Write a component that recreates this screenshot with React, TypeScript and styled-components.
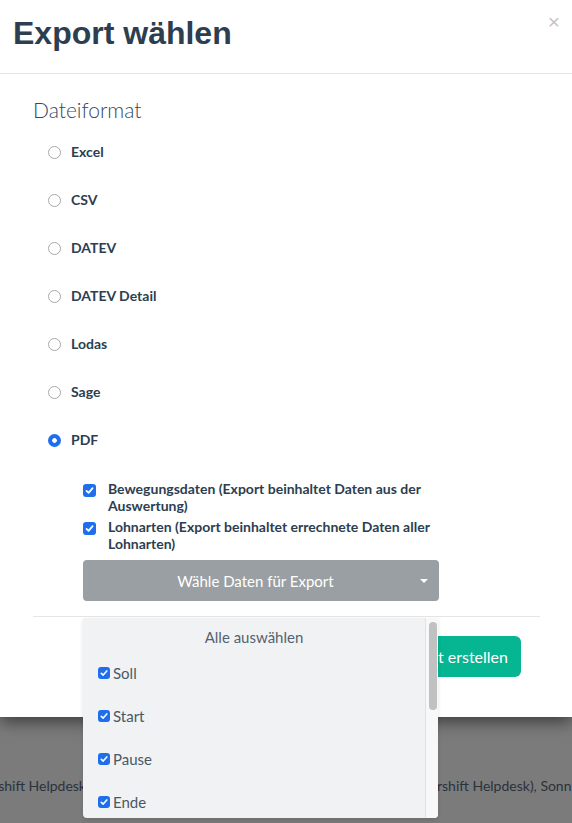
import React, { useState } from 'react'
import styled, { createGlobalStyle } from 'styled-components'

const GlobalStyle = createGlobalStyle`
  html, body {
    margin: 0;
    padding: 0;
  }
  body {
    background: #7b7b7b;
    font-family: Lato, 'Noto Sans', sans-serif;
    overflow: hidden;
  }
`

const blue = '#1f6fed'
const ink = '#2c3e50'

const Page = styled.div`
  width: 572px;
  height: 823px;
  overflow: hidden;
`

const Modal = styled.div`
  position: relative;
  z-index: 1;
  background: #fff;
  box-shadow: 0 5px 15px rgba(0, 0, 0, 0.5);
`

const Header = styled.div`
  box-sizing: border-box;
  height: 74px;
  display: flex;
  justify-content: space-between;
  align-items: flex-start;
  padding: 14px 12px 0 13px;
  border-bottom: 1px solid #e5e5e5;
`

const Title = styled.h2`
  margin: 0;
  font: 700 32px/38px 'Liberation Sans', Arial, sans-serif;
  color: ${ink};
`

const Close = styled.button`
  border: 0;
  background: none;
  padding: 0;
  margin-top: 0;
  font: 400 21px/16px 'Liberation Sans', Arial, sans-serif;
  color: #c4c4c4;
  cursor: pointer;
`

const Body = styled.div`
  padding: 24px 32px 0 33px;
`

const SectionTitle = styled.h3`
  margin: 0 0 20px;
  font: 300 21px/24px Lato, sans-serif;
  color: #34495e;
`

const RadioList = styled.div`
  display: flex;
  flex-direction: column;
  gap: 28px;
  padding-left: 15px;
`

const RadioRow = styled.label`
  display: flex;
  align-items: center;
  gap: 10px;
  font: 700 14px/20px Lato, sans-serif;
  color: ${ink};
  cursor: pointer;
`

const Radio = styled.span<{ $on: boolean }>`
  box-sizing: border-box;
  width: 13px;
  height: 13px;
  border-radius: 50%;
  flex: none;
  border: ${p => (p.$on ? 'none' : '1px solid #a9a9a9')};
  background: ${p =>
    p.$on ? `radial-gradient(circle, #fff 0 2px, ${blue} 2.6px)` : '#fff'};
`

const Sub = styled.div`
  width: 356px;
  margin: 30px 0 0 50px;
`

const CheckList = styled.div`
  display: flex;
  flex-direction: column;
  gap: 4px;
`

const CheckRow = styled.label`
  display: flex;
  align-items: flex-start;
  gap: 12px;
  font: 700 14px/17px Lato, sans-serif;
  color: ${ink};
`

const Box = styled.span<{ $size: number }>`
  flex: none;
  display: inline-flex;
  align-items: center;
  justify-content: center;
  width: ${p => p.$size}px;
  height: ${p => p.$size}px;
  border-radius: 3px;
  background: ${blue};
`

const CheckBoxSlot = styled.span`
  padding-top: 2px;
`

const SelectWrap = styled.div`
  position: relative;
  margin-top: 8px;
`

const SelectButton = styled.button`
  box-sizing: border-box;
  width: 356px;
  height: 41px;
  display: grid;
  grid-template-columns: 1fr auto 1fr;
  align-items: center;
  border: 0;
  border-radius: 4px;
  background: #9a9fa3;
  color: #fff;
  font: 400 15px/20px Lato, sans-serif;
  padding: 0 11px 0 0;
`

const Caret = styled.span`
  justify-self: end;
  width: 0;
  height: 0;
  border-left: 4px solid transparent;
  border-right: 4px solid transparent;
  border-top: 4px solid #fff;
`

const Dropdown = styled.div`
  position: absolute;
  z-index: 2;
  top: calc(100% + 17px);
  left: 0;
  width: 355px;
  height: 200px;
  display: flex;
  background: #f0f2f4;
  border-radius: 0 0 4px 4px;
  box-shadow: 0 2px 4px rgba(0, 0, 0, 0.12);
  overflow: hidden;
`

const OptionList = styled.div`
  flex: 1;
  padding-top: 9px;
  overflow: hidden;
`

const SelectAll = styled.div`
  text-align: center;
  font: 400 15px/20px Lato, sans-serif;
  color: #56626f;
  margin-bottom: 16px;
`

const Options = styled.div`
  display: flex;
  flex-direction: column;
  gap: 23px;
`

const Option = styled.label`
  display: flex;
  align-items: center;
  gap: 3px;
  padding-left: 15px;
  font: 400 15px/20px Lato, sans-serif;
  color: #4a5866;
`

const ScrollTrack = styled.div`
  box-sizing: border-box;
  width: 13px;
  flex: none;
  border-left: 1px solid #e2e2e2;
  background: #f8f8f8;
  padding: 4px 2px 0 3px;
`

const ScrollThumb = styled.div`
  width: 8px;
  height: 88px;
  border-radius: 4px;
  background: #c1c1c1;
`

const Footer = styled.div`
  margin-top: 15px;
  border-top: 1px solid #e5e5e5;
  padding: 19px 19px 40px 0;
  display: flex;
  justify-content: flex-end;
`

const PrimaryButton = styled.button`
  height: 41px;
  border: 0;
  border-radius: 6px;
  background: #06b591;
  color: #fff;
  font: 400 16px/20px Lato, sans-serif;
  padding: 0 13px 0 14px;
`

const BackdropLine = styled.div`
  display: flex;
  margin-top: 59px;
  font: 400 14px/20px Lato, sans-serif;
  color: #2a323c;
  white-space: nowrap;
`

const BackdropLeft = styled.span`
  width: 86px;
  flex: none;
  display: flex;
  justify-content: flex-end;
  overflow: hidden;
`

const BackdropRight = styled.span`
  margin-left: 351px;
`

const Check = ({ size }: { size: number }) => (
  <Box $size={size}>
    <svg width={size - 2} height={size - 2} viewBox="0 0 10 10">
      <path
        d="M2.3 5.3 4.2 7.1 7.8 2.9"
        fill="none"
        stroke="#fff"
        strokeWidth="1.6"
        strokeLinecap="round"
        strokeLinejoin="round"
      />
    </svg>
  </Box>
)

const formats = ['Excel', 'CSV', 'DATEV', 'DATEV Detail', 'Lodas', 'Sage', 'PDF']
const options = ['Soll', 'Start', 'Pause', 'Ende']

const App = () => {
  const [format, setFormat] = useState('PDF')

  return (
    <Page>
      <GlobalStyle />
      <Modal>
        <Header>
          <Title>Export wählen</Title>
          <Close aria-label="Schließen">×</Close>
        </Header>
        <Body>
          <SectionTitle>Dateiformat</SectionTitle>
          <RadioList>
            {formats.map(f => (
              <RadioRow key={f} onClick={() => setFormat(f)}>
                <Radio $on={format === f} />
                {f}
              </RadioRow>
            ))}
          </RadioList>
          <Sub>
            <CheckList>
              <CheckRow>
                <CheckBoxSlot>
                  <Check size={13} />
                </CheckBoxSlot>
                <span>Bewegungsdaten (Export beinhaltet Daten aus der Auswertung)</span>
              </CheckRow>
              <CheckRow>
                <CheckBoxSlot>
                  <Check size={13} />
                </CheckBoxSlot>
                <span>Lohnarten (Export beinhaltet errechnete Daten aller Lohnarten)</span>
              </CheckRow>
            </CheckList>
            <SelectWrap>
              <SelectButton>
                <span />
                <span>Wähle Daten für Export</span>
                <Caret />
              </SelectButton>
              <Dropdown>
                <OptionList>
                  <SelectAll>Alle auswählen</SelectAll>
                  <Options>
                    {options.map(o => (
                      <Option key={o}>
                        <Check size={12} />
                        {o}
                      </Option>
                    ))}
                  </Options>
                </OptionList>
                <ScrollTrack>
                  <ScrollThumb />
                </ScrollTrack>
              </Dropdown>
            </SelectWrap>
          </Sub>
          <Footer>
            <PrimaryButton>Export erstellen</PrimaryButton>
          </Footer>
        </Body>
      </Modal>
      <BackdropLine>
        <BackdropLeft>
          <span>Montag (Powershift Helpdesk</span>
        </BackdropLeft>
        <BackdropRight>rshift Helpdesk), Sonntag (Powershift Helpdesk)</BackdropRight>
      </BackdropLine>
    </Page>
  )
}

export default App
